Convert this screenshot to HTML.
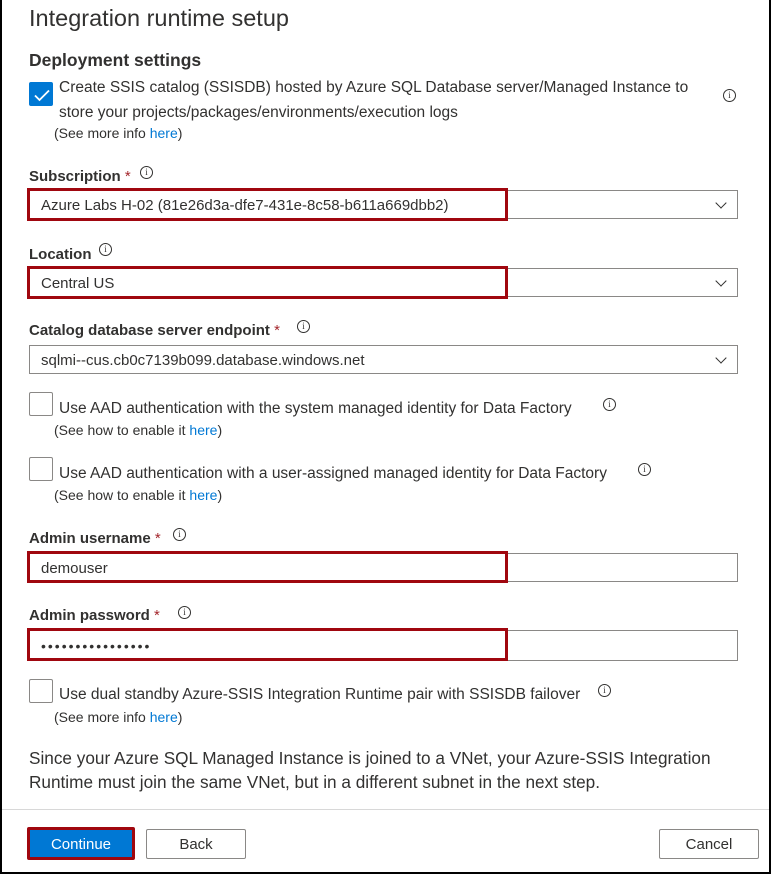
<!DOCTYPE html>
<html><head><meta charset="utf-8"><style>
*{box-sizing:border-box;margin:0;padding:0}
body{width:771px;height:874px;background:#fff;font-family:"Liberation Sans",sans-serif;color:#323130;position:relative;overflow:hidden}
.frame{position:absolute;left:0;top:0;width:771px;height:874px;border:2px solid #000;border-top:none}
.a{position:absolute;white-space:nowrap}
.t{font-size:15.5px}
.s{font-size:14px}
.lbl{font-size:15px;font-weight:bold}
.star{color:#a4262c;font-weight:normal}
.info{position:absolute;width:13px;height:13px;border:1px solid #323130;border-radius:50%;font-size:9px;line-height:11px;text-align:center;font-family:"Liberation Serif",serif}
.box{position:absolute;left:29px;width:709px;border:1px solid #8a8886;background:#fff;font-size:15px;padding-left:11px}
.red{position:absolute;left:27px;width:481px;border:3px solid #a0070f}
.cb{position:absolute;left:29px;width:24px;height:24px;border:1px solid #8a8886;border-radius:2px;background:#fff}
.chev{position:absolute;right:12px;top:8px;width:8px;height:8px;border-right:1.3px solid #323130;border-bottom:1.3px solid #323130;transform:rotate(45deg)}
a{color:#0078d4;text-decoration:none}
.btn{position:absolute;top:829px;height:30px;border:1px solid #8a8886;border-radius:2px;font-size:15px;text-align:center;line-height:30px;background:#fff}
</style></head><body>
<div class="a" style="left:29px;top:5px;font-size:23.5px">Integration runtime setup</div>
<div class="a" style="left:29px;top:50px;font-size:17.5px;font-weight:bold">Deployment settings</div>
<div class="cb" style="top:82px;background:#0078d4;border-color:#0078d4"><svg width="24" height="24" viewBox="0 0 24 24"><path d="M5 12.5l4.5 4.5L19 7.5" stroke="#fff" stroke-width="1.8" fill="none"/></svg></div>
<div class="a t" style="left:59px;top:79px">Create SSIS catalog (SSISDB) hosted by Azure SQL Database server/Managed Instance to</div>
<div class="a t" style="left:59px;top:104px">store your projects/packages/environments/execution logs</div>
<div class="a s" style="left:54px;top:125px">(See more info <a>here</a>)</div>
<div class="info" style="left:723px;top:89px">i</div>

<div class="a lbl" style="left:29px;top:168px">Subscription <span class="star">*</span></div>
<div class="info" style="left:140px;top:166px">i</div>
<div class="box" style="top:190px;height:29px;line-height:29px">Azure Labs H-02 (81e26d3a-dfe7-431e-8c58-b611a669dbb2)<div class="chev"></div></div>
<div class="red" style="top:188px;height:33px"></div>

<div class="a lbl" style="left:29px;top:246px">Location</div>
<div class="info" style="left:99px;top:243px">i</div>
<div class="box" style="top:268px;height:29px;line-height:29px">Central US<div class="chev"></div></div>
<div class="red" style="top:266px;height:33px"></div>

<div class="a lbl" style="left:29px;top:322px">Catalog database server endpoint <span class="star">*</span></div>
<div class="info" style="left:297px;top:320px">i</div>
<div class="box" style="top:345px;height:29px;line-height:29px">sqlmi--cus.cb0c7139b099.database.windows.net<div class="chev"></div></div>

<div class="cb" style="top:392px"></div>
<div class="a t" style="left:59px;top:400px">Use AAD authentication with the system managed identity for Data Factory</div>
<div class="info" style="left:603px;top:398px">i</div>
<div class="a s" style="left:54px;top:422px">(See how to enable it <a>here</a>)</div>

<div class="cb" style="top:457px"></div>
<div class="a t" style="left:59px;top:465px">Use AAD authentication with a user-assigned managed identity for Data Factory</div>
<div class="info" style="left:638px;top:463px">i</div>
<div class="a s" style="left:54px;top:487px">(See how to enable it <a>here</a>)</div>

<div class="a lbl" style="left:29px;top:530px">Admin username <span class="star">*</span></div>
<div class="info" style="left:173px;top:528px">i</div>
<div class="box" style="top:553px;height:29px;line-height:29px">demouser</div>
<div class="red" style="top:551px;height:32px"></div>

<div class="a lbl" style="left:29px;top:607px">Admin password <span class="star">*</span></div>
<div class="info" style="left:178px;top:606px">i</div>
<div class="box" style="top:630px;height:31px;line-height:31px;font-size:14px;letter-spacing:2px">••••••••••••••••</div>
<div class="red" style="top:628px;height:33px"></div>

<div class="cb" style="top:679px"></div>
<div class="a t" style="left:59px;top:686px">Use dual standby Azure-SSIS Integration Runtime pair with SSISDB failover</div>
<div class="info" style="left:598px;top:684px">i</div>
<div class="a s" style="left:54px;top:709px">(See more info <a>here</a>)</div>

<div class="a" style="left:29px;top:748px;font-size:17.2px">Since your Azure SQL Managed Instance is joined to a VNet, your Azure-SSIS Integration</div>
<div class="a" style="left:29px;top:772px;font-size:17.2px">Runtime must join the same VNet, but in a different subnet in the next step.</div>

<div style="position:absolute;left:2px;top:809px;width:767px;height:1px;background:#d8d8d8"></div>
<div class="btn" style="left:27px;top:827px;width:108px;height:33px;background:#0078d4;color:#fff;border:3px solid #a0070f;line-height:29px">Continue</div>
<div class="btn" style="left:146px;width:100px">Back</div>
<div class="btn" style="left:659px;width:100px">Cancel</div>
<div class="frame"></div>
</body></html>
